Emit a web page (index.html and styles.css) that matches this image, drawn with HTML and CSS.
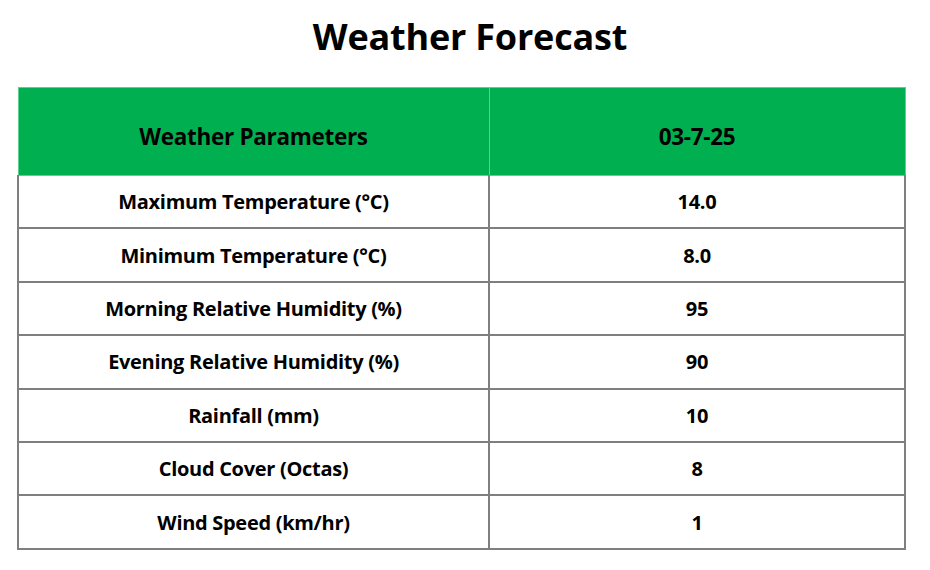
FILE: index.html
```html
<!DOCTYPE html>
<html>
<head>
<meta charset="utf-8">
<link rel="stylesheet" href="styles.css">
</head>
<body>
<div class="page">
  <h1 class="title">Weather Forecast</h1>
  <table class="forecast">
    <thead>
      <tr><th class="col-param">Weather Parameters</th><th class="col-val">03-7-25</th></tr>
    </thead>
    <tbody>
      <tr><td>Maximum Temperature (°C)</td><td>14.0</td></tr>
      <tr><td>Minimum Temperature (°C)</td><td>8.0</td></tr>
      <tr><td>Morning Relative Humidity (%)</td><td>95</td></tr>
      <tr><td>Evening Relative Humidity (%)</td><td>90</td></tr>
      <tr><td>Rainfall (mm)</td><td>10</td></tr>
      <tr><td>Cloud Cover (Octas)</td><td>8</td></tr>
      <tr><td>Wind Speed (km/hr)</td><td>1</td></tr>
    </tbody>
  </table>
</div>
</body>
</html>
```
FILE: styles.css
```css
html, body {
  margin: 0;
  padding: 0;
  background: #ffffff;
}
.page {
  width: 930px;
  height: 570px;
  font-family: "Open Sans", "Noto Sans", sans-serif;
  color: #000;
  padding-top: 13px;
  box-sizing: border-box;
}
.title {
  margin: 0;
  height: 74px;
  text-align: center;
  font-size: 36px;
  font-weight: 700;
  line-height: 48px;
  padding-left: 10px;
  letter-spacing: -0.2px;
}
.forecast {
  margin-left: 17px;
  width: 889px;
  border-collapse: collapse;
  table-layout: fixed;
}
.forecast th {
  background: #00b050;
  height: 88px;
  padding: 10px 0 0 0;
  box-sizing: border-box;
  font-size: 22.5px;
  font-weight: 700;
  border: 1px solid #5fd08c;
  text-align: center;
  letter-spacing: -0.3px;
}
.col-param { width: 471px; }
.forecast td {
  height: 51.4px;
  padding: 0;
  text-align: center;
  font-size: 20px;
  font-weight: 700;
  border: 2px solid #7f7f7f;
  letter-spacing: -0.3px;
}
.forecast tbody tr:first-child td { border-top-width: 1px; }
```
